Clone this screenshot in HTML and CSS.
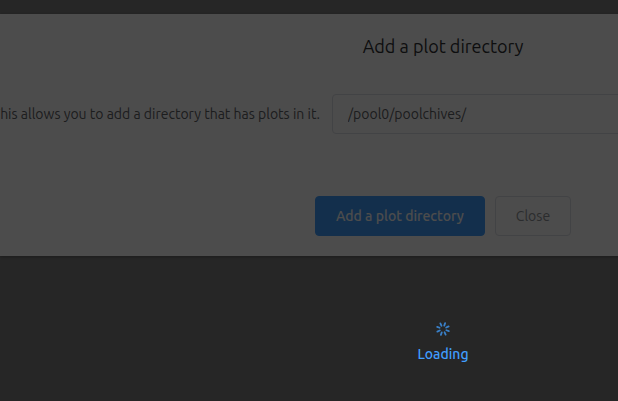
FILE: index.html
```
<!DOCTYPE html>
<html lang="en">
<head>
    <meta charset="UTF-8">
    <meta name="viewport" content="width=device-width, initial-scale=1.0">
    <title>Add a plot directory</title>
    <link rel="stylesheet" href="styles.css">
</head>
<body>
    <div class="stage">
        <form class="dialog">
            <h1 class="dialog-title">Add a plot directory</h1>
            <div class="form-item">
                <label class="form-label" for="plotDir">This allows you to add a directory that has plots in it.</label>
                <input class="form-input" id="plotDir" name="plotDir" type="text" value="/pool0/poolchives/">
            </div>
            <div class="dialog-footer">
                <button type="button" class="button button-primary">Add a plot directory</button>
                <button type="button" class="button">Close</button>
            </div>
        </form>

        <div class="loading-mask">
            <div class="loading" role="status">
                <svg class="loading-icon" viewBox="0 0 16 16" width="16" height="16" fill="none" stroke="currentColor" stroke-width="1.8" stroke-linecap="round" aria-hidden="true">
                    <path d="M8 1.8v2.6M8 11.6v2.6M1.8 8h2.6M11.6 8h2.6M3.6 3.6l1.9 1.9M10.5 10.5l1.9 1.9M12.4 3.6l-1.9 1.9M5.5 10.5l-1.9 1.9" transform="rotate(20 8 8)"/>
                </svg>
                <p class="loading-text">Loading</p>
            </div>
        </div>
    </div>
</body>
</html>
```

FILE: styles.css
```
* {
    box-sizing: border-box;
}

body {
    margin: 0;
    background: #808080;
    font-family: Ubuntu, "Noto Sans", sans-serif;
    font-size: 14px;
    line-height: 20px;
    overflow: hidden;
}

/* the dialog is wider than the window and runs off its right side */
.stage {
    position: relative;
    min-height: 100vh;
    margin-right: -268px;
    padding-top: 14px;
}

.dialog {
    padding: 20px 0;
    background: #fff;
    box-shadow: 0 1px 3px rgba(0, 0, 0, 0.3);
}

.dialog-title {
    margin: 0 0 36px;
    color: #303133;
    font-size: 18px;
    font-weight: 400;
    line-height: 24px;
    text-align: center;
}

.form-item {
    display: flex;
    align-items: center;
    gap: 12px;
    margin-bottom: 62px;
}

.form-label {
    display: flex;
    flex: 0 0 320px;
    justify-content: flex-end;
    min-width: 0;
    width: 320px;
    color: #606266;
    white-space: nowrap;
}

.form-input {
    flex: 1;
    height: 40px;
    padding: 0 15px;
    border: 1px solid #dcdfe6;
    border-radius: 4px;
    background: #fff;
    color: #606266;
    font: inherit;
    outline: none;
}

.dialog-footer {
    display: flex;
    justify-content: center;
    gap: 10px;
}

.button {
    height: 40px;
    padding: 0 20px;
    border: 1px solid #dcdfe6;
    border-radius: 4px;
    background: #fff;
    color: #909399;
    font: inherit;
    cursor: pointer;
}

.button-primary {
    border-color: #409eff;
    background: #409eff;
    color: #fff;
    font-weight: 500;
}

.loading-mask {
    position: absolute;
    inset: 0;
    background: rgba(0, 0, 0, 0.7);
}

.loading {
    display: flex;
    flex-direction: column;
    align-items: center;
    padding-top: 321px;
    color: #409eff;
}

.loading-icon {
    opacity: 0.75;
}

.loading-text {
    margin: 7px 0 0;
    font-weight: 500;
}
```
